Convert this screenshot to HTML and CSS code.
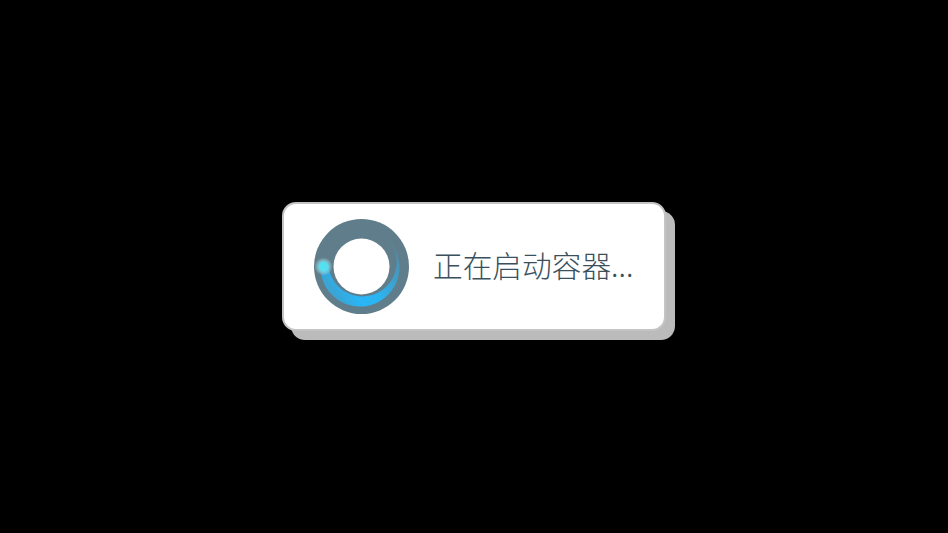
FILE: index.html
```html
<!DOCTYPE html>
<html lang="zh">
<head>
<meta charset="utf-8">
<title>正在启动容器</title>
<link rel="stylesheet" href="styles.css">
</head>
<body>
<div class="toast">
  <svg class="spinner" width="95" height="95" viewBox="-47.5 -47.5 95 95" aria-hidden="true">
    <defs>
      <linearGradient id="sweep" gradientUnits="userSpaceOnUse" x1="30" y1="-30" x2="-35" y2="15">
        <stop offset="0" stop-color="#29b6f6" stop-opacity="0.05"/>
        <stop offset="0.13" stop-color="#29b6f6" stop-opacity="0.4"/>
        <stop offset="0.56" stop-color="#29b6f6" stop-opacity="0.95"/>
        <stop offset="0.8" stop-color="#29b6f6"/>
        <stop offset="1" stop-color="#29b6f6" stop-opacity="0.7"/>
      </linearGradient>
      <radialGradient id="glow">
        <stop offset="0" stop-color="#55e0f2"/>
        <stop offset="0.45" stop-color="#55e0f2"/>
        <stop offset="0.7" stop-color="#8fd0dc" stop-opacity="0.6"/>
        <stop offset="1" stop-color="#b8d4dc" stop-opacity="0"/>
      </radialGradient>
      <filter id="soft" x="-20%" y="-20%" width="140%" height="140%"><feGaussianBlur stdDeviation="0.5"/></filter>
    </defs>
    <circle r="47.5" fill="#607d8b"/>
    <path d="M23.5 -30 A39.5 39.5 0 1 1 -41 0 L-33 0 A34.2 34.2 0 1 0 23.5 -30 Z" fill="url(#sweep)" filter="url(#soft)"/>
    <circle cx="-38" cy="0" r="9" fill="url(#glow)"/>
    <circle r="28" fill="#fff"/>
  </svg>
  <span class="label">正在启动容器...</span>
</div>
</body>
</html>
```

FILE: styles.css
```css
html, body {
  margin: 0;
  height: 100%;
  background: #000;
}
body {
  display: flex;
  align-items: center;
  justify-content: center;
}
.toast {
  box-sizing: border-box;
  width: 384px;
  height: 129px;
  display: flex;
  align-items: center;
  gap: 24px;
  padding-left: 30px;
  background: #fff;
  border: 2px solid #c4c4c4;
  border-radius: 14px;
  box-shadow: 9px 9px 0 #bbb;
}
.spinner {
  flex: none;
  display: block;
}
.label {
  padding-bottom: 5px;
  font-family: "Noto Sans CJK SC", "Noto Sans", sans-serif;
  font-size: 29.7px;
  font-weight: 300;
  color: #3a505c;
  white-space: nowrap;
}
```
